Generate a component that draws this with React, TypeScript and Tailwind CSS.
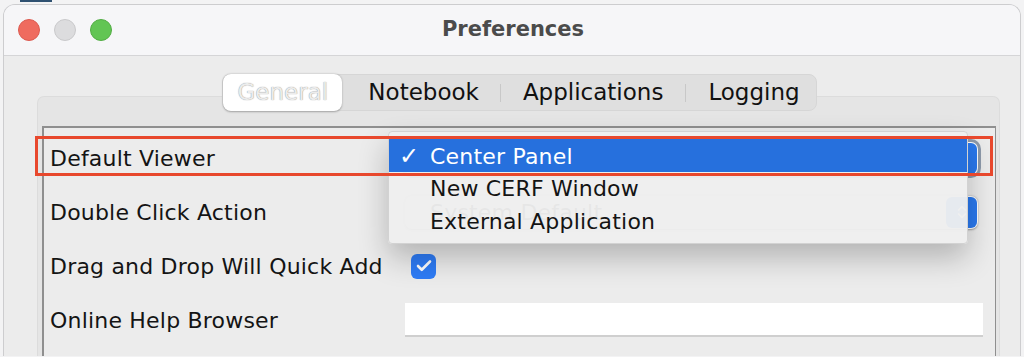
import { Check, ChevronsUpDown } from "lucide-react";

const tabs = [
  { label: "Notebook", pad: "pl-[26px] pr-[21px]" },
  { label: "Applications", pad: "px-[22px]" },
  { label: "Logging", pad: "pl-[22px] pr-[16px]" },
];

const menuItems = ["New CERF Window", "External Application"];

function Combo({ value, focused }: { value: string; focused?: boolean }) {
  return (
    <div
      className={`flex h-[33px] w-[573px] shrink-0 items-center rounded-[7px] bg-white shadow-[0_0.5px_2px_rgba(0,0,0,0.35)] ${
        focused ? "ring-[3px] ring-[#8e9aab]" : ""
      }`}
    >
      <span className="flex-1 pl-[25px] text-[22px] text-[#1a1a1a]">{value}</span>
      <span className="mr-[1px] grid h-[31px] w-[31px] place-items-center rounded-[6px] bg-[#2a79ef]">
        <ChevronsUpDown className="h-4 w-4 text-white" strokeWidth={2.5} />
      </span>
    </div>
  );
}

export default function App() {
  return (
    <div className="relative h-[357px] w-[1024px] overflow-hidden bg-[#f3f3f4] font-['DejaVu_Sans',sans-serif]">
      <div className="h-[4px]">
        <div className="ml-[20px] h-[2px] w-[32px] bg-[#2f5171]" />
      </div>

      <div className="ml-[3px] w-[1018px] overflow-hidden rounded-t-[12px] border border-b-0 border-[#cdcdcf]">
        {/* title bar */}
        <div className="grid h-[51px] grid-cols-[1fr_auto_1fr] items-center border-b border-[#d5d5d7] bg-[#f6f6f8]">
          <div className="flex items-center gap-[14px] pl-[14px]">
            <span className="h-[22px] w-[22px] rounded-full border border-[#dc5a50] bg-[#ef6b5f]" />
            <span className="h-[22px] w-[22px] rounded-full border border-[#c9c9cb] bg-[#dcdcde]" />
            <span className="h-[22px] w-[22px] rounded-full border border-[#53ad45] bg-[#62c554]" />
          </div>
          <div className="pl-[2px] text-[21px] font-bold text-[#4b4b4b]">Preferences</div>
          <div />
        </div>

        {/* body */}
        <div className="h-[300px] bg-[#ececec] pl-[33px] pr-[20px] pt-[18px]">
          <div className="relative z-10 flex justify-center pl-[2px]">
            <div className="flex h-[37px] items-center rounded-[8px] border border-[#d6d6d6] bg-[#dfdfdf]">
              <div className="grid h-[37px] w-[119px] place-items-center rounded-[8px] bg-white text-[23px] text-[#ececec] shadow-[0_0.5px_2px_rgba(0,0,0,0.3)] [text-shadow:0_0_1px_#777]">
                General
              </div>
              {tabs.map((tab, i) => (
                <div key={tab.label} className="flex items-center">
                  {i > 0 && <span className="h-[18px] w-px bg-[#c8c8c8]" />}
                  <span className={`${tab.pad} text-[23px] text-[#111]`}>{tab.label}</span>
                </div>
              ))}
            </div>
          </div>

          <div className="-mt-[15px] rounded-t-[7px] border border-b-0 border-[#dcdcdc] bg-[#e5e5e5] pl-[4px] pr-[3px] pt-[29px]">
            <div className="h-[240px] border-l-2 border-r border-t-2 border-[#8f8f8f] bg-[#ececec] pl-[6px] pr-[12px] pt-[3px] text-[22px] tracking-[0.2px] text-[#141414]">
              <div className="flex h-[54px] items-center">
                <span className="w-[355px] shrink-0">Default Viewer</span>
                <Combo value="Center Panel" focused />
              </div>
              <div className="flex h-[54px] items-center">
                <span className="w-[355px] shrink-0">Double Click Action</span>
                <Combo value="System Default" />
              </div>
              <div className="flex h-[54px] items-center">
                <span className="w-[355px] shrink-0">Drag and Drop Will Quick Add</span>
                <span className="ml-[6px] grid h-[25px] w-[25px] place-items-center rounded-[6px] bg-[#2e7cf6]">
                  <Check className="h-[18px] w-[18px] text-white" strokeWidth={3.5} />
                </span>
              </div>
              <div className="flex h-[54px] items-center">
                <span className="w-[355px] shrink-0">Online Help Browser</span>
                <div className="h-[34px] w-[578px] shrink-0 border-b-2 border-[#cfcfcf] bg-white" />
              </div>
            </div>
          </div>
        </div>
      </div>

      {/* popup menu */}
      <div className="absolute left-[388px] top-[131px] z-20 h-[113px] w-[580px] rounded-[4px] border border-[#d2d2d2] bg-[#eeeeee]/[0.96] pt-[6px] text-[22px] tracking-[0.2px] text-[#141414] shadow-[0_14px_30px_rgba(0,0,0,0.24)]">
        <div className="flex h-[34px] items-center bg-[#2670dd] pt-[2px] text-white">
          <span className="w-[41px] pl-[10px] text-[24px]">✓</span>
          <span>Center Panel</span>
        </div>
        {menuItems.map((item) => (
          <div key={item} className="flex h-[33px] items-center pl-[41px]">
            {item}
          </div>
        ))}
      </div>

      {/* annotation */}
      <div className="absolute left-[35px] top-[136px] z-30 h-[40px] w-[958px] border-[3px] border-[#e8482d]" />
    </div>
  );
}
